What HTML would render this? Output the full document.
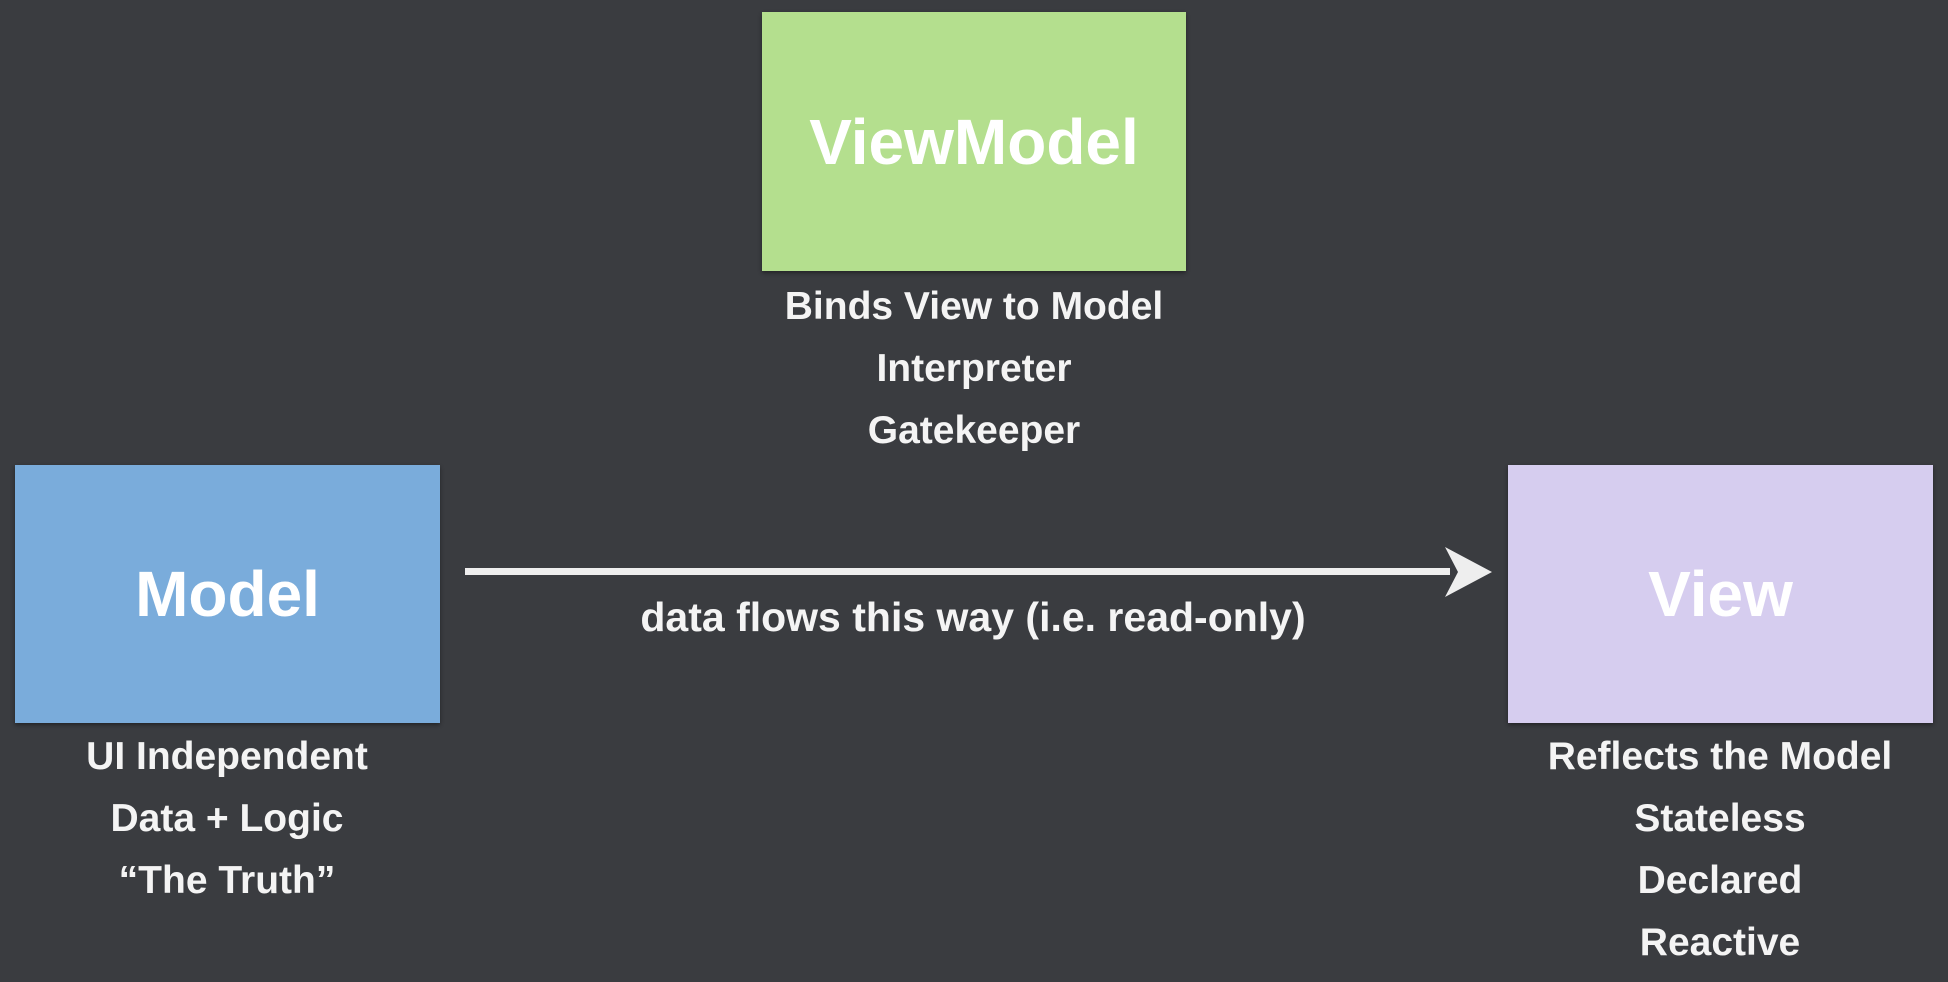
<!DOCTYPE html>
<html><head><meta charset="utf-8"><style>
html,body{margin:0;padding:0}
body{width:1948px;height:982px;overflow:hidden;background:#3a3c40;position:relative;font-family:"Liberation Sans","DejaVu Sans",sans-serif;color:#f4f4f4}
.box{position:absolute;display:flex;align-items:center;justify-content:center;font-size:64px;font-weight:bold;color:#fff;box-shadow:0 2px 4px rgba(0,0,0,.4)}
.lbl{position:absolute;text-align:center;font-size:39px;font-weight:bold;line-height:62px;width:700px}
</style></head><body>
<div class="box" style="left:762px;top:12px;width:424px;height:259px;background:#b4df8e">ViewModel</div>
<div class="lbl" style="left:624px;top:276px">Binds View to Model<br>Interpreter<br>Gatekeeper</div>
<div class="box" style="left:15px;top:465px;width:425px;height:258px;background:#7aacdb">Model</div>
<div class="lbl" style="left:-123px;top:726px">UI Independent<br>Data + Logic<br>“The Truth”</div>
<div class="box" style="left:1508px;top:465px;width:425px;height:258px;background:#d6cdef">View</div>
<div class="lbl" style="left:1370px;top:726px">Reflects the Model<br>Stateless<br>Declared<br>Reactive</div>
<div style="position:absolute;left:465px;top:568px;width:985px;height:7px;background:#eee"></div>
<svg style="position:absolute;left:1440px;top:545px" width="54" height="54"><polygon points="5,2 52,27 5,52 18,27" fill="#eee"/></svg>
<div class="lbl" style="left:573px;top:586px;width:800px;font-size:41px">data flows this way (i.e. read-only)</div>
</body></html>
